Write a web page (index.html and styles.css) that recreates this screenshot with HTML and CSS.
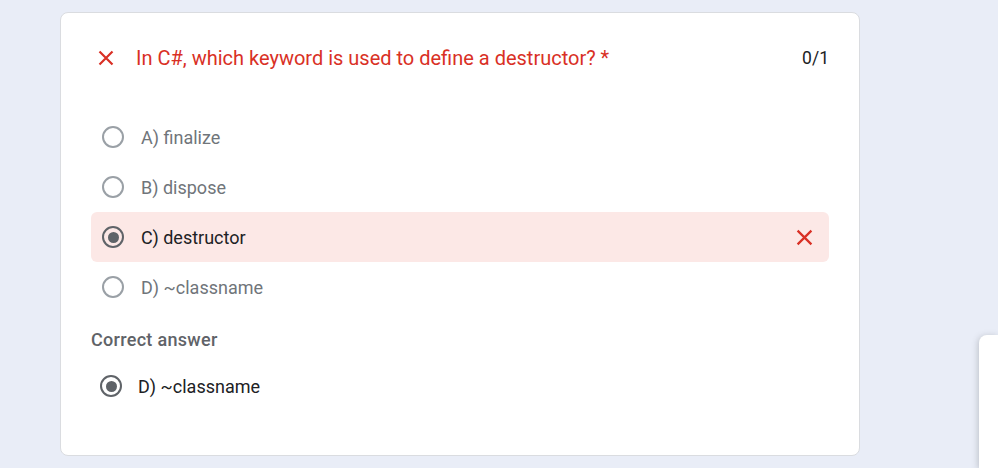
FILE: index.html
```html
<!DOCTYPE html>
<html lang="en">
<head>
<meta charset="utf-8">
<title>Quiz result</title>
<link rel="stylesheet" href="styles.css">
</head>
<body>
<div class="page">
  <div class="card">
    <div class="header">
      <svg class="hx" viewBox="0 0 16 16" width="16" height="16"><path d="M1.5 1.5 L14.5 14.5 M14.5 1.5 L1.5 14.5" stroke="#d93025" stroke-width="2.2" fill="none"/></svg>
      <div class="title">In C#, which keyword is used to define a destructor? *</div>
      <div class="score">0/1</div>
    </div>
    <div class="options">
      <div class="opt"><span class="radio"></span><span class="label">A) finalize</span></div>
      <div class="opt"><span class="radio"></span><span class="label">B) dispose</span></div>
      <div class="opt wrong"><span class="radio checked"></span><span class="label">C) destructor</span>
        <svg class="ox" viewBox="0 0 16 16" width="17" height="17"><path d="M1.5 1.5 L14.5 14.5 M14.5 1.5 L1.5 14.5" stroke="#d93025" stroke-width="2.1" fill="none"/></svg>
      </div>
      <div class="opt"><span class="radio"></span><span class="label">D) ~classname</span></div>
    </div>
    <div class="correct-title">Correct answer</div>
    <div class="opt correct"><span class="radio checked"></span><span class="label">D) ~classname</span></div>
  </div>
  <div class="side"></div>
</div>
</body>
</html>
```
FILE: styles.css
```css
html, body {
  margin: 0;
  padding: 0;
}
body {
  background: #e9edf7;
  font-family: Roboto, "Liberation Sans", Arial, sans-serif;
  width: 998px;
  height: 468px;
  overflow: hidden;
}
.page {
  position: relative;
  height: 468px;
  padding: 12px 0 0 60px;
  box-sizing: border-box;
}
.card {
  box-sizing: border-box;
  width: 800px;
  height: 444px;
  background: #fff;
  border: 1px solid #dadce0;
  border-radius: 8px;
  padding: 24px 30px 0 30px;
}
.header {
  display: flex;
  align-items: center;
  height: 42px;
}
.hx {
  margin-left: 7px;
  flex: none;
}
.title {
  margin-left: 22px;
  flex: 1;
  color: #d93025;
  font-size: 20px;
}
.score {
  color: #202124;
  font-size: 17.5px;
}
.options {
  margin-top: 33px;
}
.opt {
  display: flex;
  align-items: center;
  height: 50px;
  padding-left: 11px;
  border-radius: 6px;
}
.opt.wrong {
  background: #fce8e6;
}
.radio {
  box-sizing: border-box;
  width: 22px;
  height: 22px;
  border: 2px solid #9aa0a6;
  border-radius: 50%;
  flex: none;
  display: flex;
  align-items: center;
  justify-content: center;
}
.radio.checked {
  border-color: #5f6368;
}
.radio.checked::after {
  content: "";
  width: 11px;
  height: 11px;
  border-radius: 50%;
  background: #5f6368;
}
.label {
  margin-left: 17px;
  font-size: 18px;
  color: #70757a;
  flex: 1;
}
.wrong .label, .correct .label {
  color: #202124;
}
.ox {
  margin-right: 16px;
}
.correct-title {
  margin-top: 18px;
  height: 20px;
  line-height: 20px;
  font-size: 18px;
  font-weight: 500;
  color: #5f6368;
  letter-spacing: 0.3px;
}
.opt.correct {
  margin-top: 11px;
  padding-left: 9px;
}
.correct .label {
  margin-left: 16px;
}
.side {
  position: absolute;
  left: 979px;
  top: 335px;
  width: 19px;
  height: 133px;
  background: #fff;
  border-radius: 8px 0 0 0;
  box-shadow: -1px 1px 6px rgba(60,64,67,0.25);
}
```
